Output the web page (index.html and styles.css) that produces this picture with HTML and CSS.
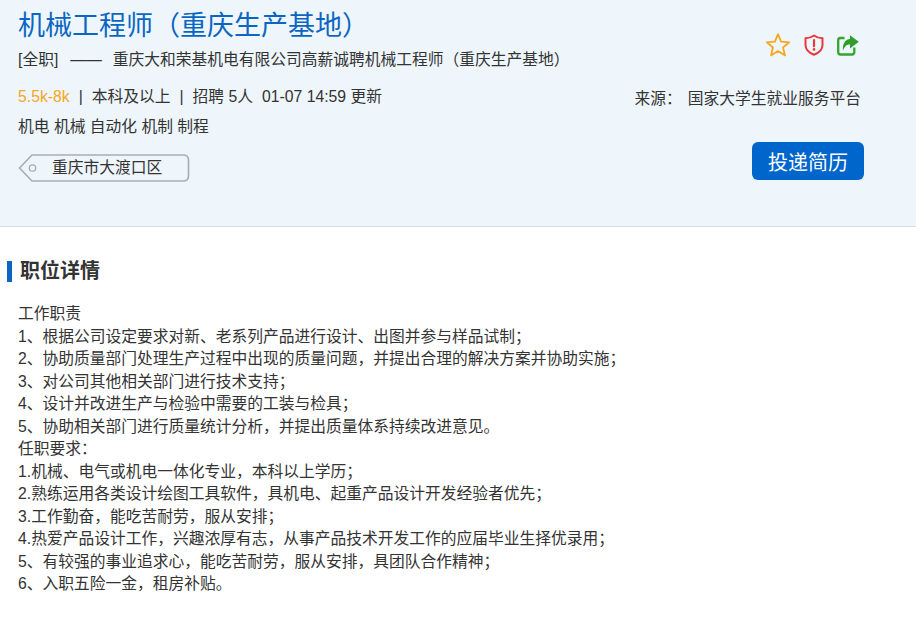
FILE: index.html
```html
<!DOCTYPE html>
<html lang="zh-CN">
<head>
<meta charset="utf-8">
<title>机械工程师（重庆生产基地）</title>
<link rel="stylesheet" href="styles.css">
</head>
<body>
<header class="job-head">
  <div class="head-left">
    <h1 class="job-title">机械工程师（重庆生产基地）</h1>
    <p class="job-sub"><span>[全职]</span><span class="dash">——</span><span>重庆大和荣基机电有限公司高薪诚聘机械工程师（重庆生产基地）</span></p>
    <p class="job-meta"><span class="salary">5.5k-8k</span><span class="sep">|</span><span>本科及以上</span><span class="sep">|</span><span>招聘 5人</span><span class="time">01-07 14:59 更新</span></p>
    <p class="job-tags">机电 机械 自动化 机制 制程</p>
    <div class="place">
      <svg class="place-shape" width="172" height="28" viewBox="0 0 172 28" aria-hidden="true">
        <path d="M1.500 14 L14 1 H165 Q170.500 1 170.500 6 V22 Q170.500 27 165 27 H14 Z" fill="#eef6fc" stroke="#a9adb0" stroke-width="1.600"/>
        <circle cx="14.500" cy="14" r="3.200" fill="none" stroke="#a9adb0" stroke-width="1.300"/>
      </svg>
      <span class="place-text">重庆市大渡口区</span>
    </div>
  </div>
  <div class="head-right">
    <div class="actions">
      <svg width="26" height="26" viewBox="0 0 26 26" aria-hidden="true"><path d="M13 2.200 L16.100 9.700 L24.200 10.300 L18 15.500 L20 23.400 L13 19.100 L6 23.400 L8 15.500 L1.800 10.300 L9.900 9.700 Z" fill="none" stroke="#f5a623" stroke-width="1.800" stroke-linejoin="round"/></svg>
      <svg width="20" height="22" viewBox="0 0 20 22" aria-hidden="true"><path d="M10 1.500 C12.500 3.300 15.500 4.200 18.500 4.300 V11 C18.500 15.500 15 18.800 10 20.700 C5 18.800 1.500 15.500 1.500 11 V4.300 C4.500 4.200 7.500 3.300 10 1.500 Z" fill="none" stroke="#e8383d" stroke-width="2" stroke-linejoin="round"/><path d="M10 6 V12.300" stroke="#e8383d" stroke-width="2.200" stroke-linecap="round"/><circle cx="10" cy="15.400" r="1.300" fill="#e8383d"/></svg>
      <svg width="22" height="21" viewBox="0 0 22 21" aria-hidden="true"><path d="M7.500 3 H3.500 Q1.200 3 1.200 5.300 V17 Q1.200 19.500 3.500 19.500 H15 Q17.300 19.500 17.300 17 V12.500" fill="none" stroke="#35a52f" stroke-width="2.300"/><path d="M13 0.200 L21.800 6.800 L13 13.400 V9.600 C9.800 9.600 7.600 11 6 15.800 C5.200 8.800 8.200 4.300 13 4 Z" fill="#2f9e2a"/></svg>
    </div>
    <p class="source"><span>来源：</span><span class="source-name">国家大学生就业服务平台</span></p>
    <button class="apply" type="button">投递简历</button>
  </div>
</header>
<main class="detail">
  <h2 class="detail-title">职位详情</h2>
  <div class="detail-body">
    <p>工作职责</p>
    <p>1、根据公司设定要求对新、老系列产品进行设计、出图并参与样品试制；</p>
    <p>2、协助质量部门处理生产过程中出现的质量问题，并提出合理的解决方案并协助实施；</p>
    <p>3、对公司其他相关部门进行技术支持；</p>
    <p>4、设计并改进生产与检验中需要的工装与检具；</p>
    <p>5、协助相关部门进行质量统计分析，并提出质量体系持续改进意见。</p>
    <p>任职要求：</p>
    <p>1.机械、电气或机电一体化专业，本科以上学历；</p>
    <p>2.熟练运用各类设计绘图工具软件，具机电、起重产品设计开发经验者优先；</p>
    <p>3.工作勤奋，能吃苦耐劳，服从安排；</p>
    <p>4.热爱产品设计工作，兴趣浓厚有志，从事产品技术开发工作的应届毕业生择优录用；</p>
    <p>5、有较强的事业追求心，能吃苦耐劳，服从安排，具团队合作精神；</p>
    <p>6、入职五险一金，租房补贴。</p>
  </div>
</main>
</body>
</html>
```
FILE: styles.css
```css
* { box-sizing: border-box; }
html, body { margin: 0; padding: 0; }
body {
  width: 916px;
  height: 619px;
  overflow: hidden;
  background: #fff;
  color: #333;
  font-family: "Liberation Sans", "Noto Sans CJK SC", sans-serif;
  font-size: 15.750px;
}
p, h1, h2 { margin: 0; font-weight: 400; }
.job-head {
  height: 227px;
  background: #eef6fc;
  border-bottom: 1px solid #d9dcde;
  display: flex;
  justify-content: space-between;
  padding: 8px 52px 0 18px;
}
.job-title { font-size: 27px; line-height: 37px; color: #0a66c2; }
.job-sub { margin-top: 4px; line-height: 22px; }
.dash { margin: 0 11px 0 12px; }
.job-meta { margin-top: 15px; line-height: 22px; white-space: pre; }
.salary { color: #f5a623; }
.sep { margin: 0 9px; }
.time { margin-left: 9px; }
.job-tags { margin-top: 8px; line-height: 22px; }
.place { position: relative; margin-top: 16px; width: 172px; height: 28px; }
.place-shape { display: block; }
.place-text { position: absolute; left: 34px; top: 0; line-height: 27px; }
.head-right {
  width: 230px;
  display: flex;
  flex-direction: column;
  align-items: flex-end;
}
.actions { display: flex; align-items: center; gap: 13px; margin: 23px 5px 0 0; height: 28px; }
.source { margin-top: 29px; line-height: 22px; margin-right: 3px; }
.source-name { margin-left: 6px; }
.apply {
  margin-top: 32px;
  width: 112px;
  height: 38px;
  border: 0;
  border-radius: 6px;
  background: #0066cc;
  color: #fff;
  font: inherit;
  font-size: 20px;
  padding: 0;
}
.detail { padding: 34px 0 0 7px; }
.detail-title {
  border-left: 5px solid #0a66c2;
  padding-left: 8px;
  font-size: 20px;
  line-height: 21px;
  font-weight: 700;
}
.detail-body { margin: 21px 0 0 11px; line-height: 22.500px; }
```
